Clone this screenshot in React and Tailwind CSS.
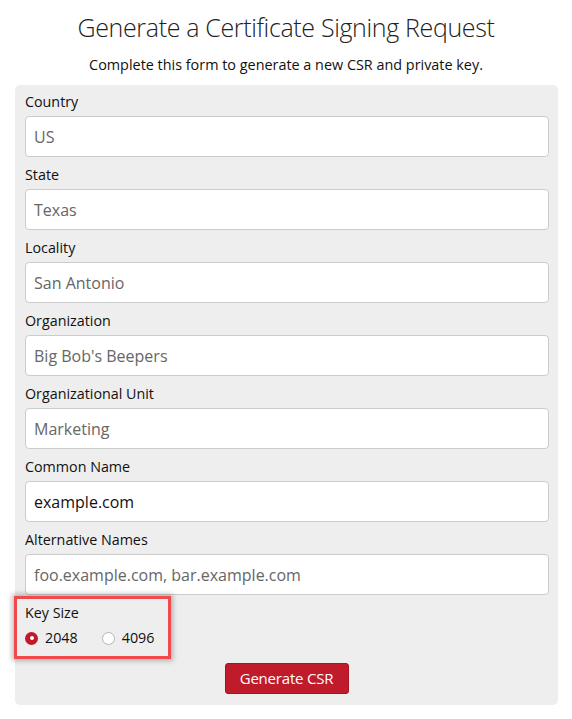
import React from "react";

const fields = [
  { label: "Country", value: "", placeholder: "US" },
  { label: "State", value: "", placeholder: "Texas" },
  { label: "Locality", value: "", placeholder: "San Antonio" },
  { label: "Organization", value: "", placeholder: "Big Bob's Beepers" },
  { label: "Organizational Unit", value: "", placeholder: "Marketing" },
  { label: "Common Name", value: "example.com", placeholder: "" },
  { label: "Alternative Names", value: "", placeholder: "foo.example.com, bar.example.com" },
];

export default function App() {
  return (
    <div
      className="w-[572px] h-[719px] bg-white text-[#111]"
      style={{ fontFamily: '"Open Sans", "Noto Sans", sans-serif' }}
    >
      <h1 className="pt-[10px] h-[44px] text-center text-[25px] leading-[34px] font-light text-[#222] tracking-[-0.35px]">
        Generate a Certificate Signing Request
      </h1>
      <p className="mt-[10px] text-center text-[14.4px] leading-[22px] text-[#111]">
        Complete this form to generate a new CSR and private key.
      </p>
      <div className="mt-[9px] mx-[15px] w-[543px] bg-[#eeeeee] rounded-[5px] px-[10px] pt-[6px] pb-[11px]">
        {fields.map((f) => (
          <div key={f.label} className="mb-[7px]">
            <label className="block h-[22px] leading-[22px] text-[14.3px] text-[#111] mb-[3px]">
              {f.label}
            </label>
            <input
              readOnly
              value={f.value}
              placeholder={f.placeholder}
              className="block w-[524px] h-[41px] bg-white border border-[#cccccc] rounded-[4px] px-[8px] pt-[1px] text-[16px] text-[#111] placeholder:text-[#666] outline-none"
            />
          </div>
        ))}
        <div className="relative">
          <div className="absolute left-[-11px] top-[-6px] w-[157px] h-[63px] border-[3px] border-[#f24a4a] shadow-[0_0_5px_2px_rgba(0,0,0,0.25)] pointer-events-none" />
          <div className="h-[22px] leading-[22px] text-[14.3px] text-[#111]">Key Size</div>
          <div className="flex items-center h-[28px] text-[14.3px]">
            <span className="flex items-center">
              <span className="w-[13px] h-[13px] rounded-full bg-[#c0192a] flex items-center justify-center">
                <span className="w-[4px] h-[4px] rounded-full bg-white" />
              </span>
              <span className="ml-[7px]">2048</span>
            </span>
            <span className="flex items-center ml-[24px]">
              <span className="w-[13px] h-[13px] rounded-full bg-white border border-[#b5b5b5]" />
              <span className="ml-[7px]">4096</span>
            </span>
          </div>
        </div>
        <div className="flex justify-center mt-[11px]">
          <button className="w-[124px] h-[31px] bg-[#c01b2b] border border-[#a8121f] rounded-[3px] text-white text-[15px] leading-[29px] tracking-[-0.2px]">
            Generate CSR
          </button>
        </div>
      </div>
    </div>
  );
}
